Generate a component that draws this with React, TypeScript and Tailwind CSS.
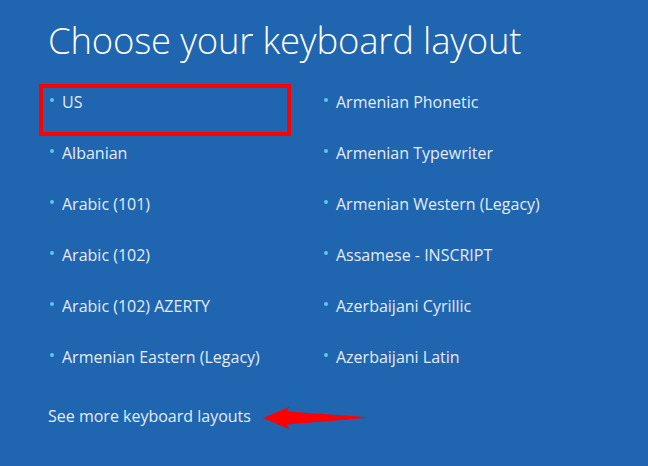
import React from 'react';

const leftCol = ['US', 'Albanian', 'Arabic (101)', 'Arabic (102)', 'Arabic (102) AZERTY', 'Armenian Eastern (Legacy)'];
const rightCol = [
  'Armenian Phonetic',
  'Armenian Typewriter',
  'Armenian Western (Legacy)',
  'Assamese - INSCRIPT',
  'Azerbaijani Cyrillic',
  'Azerbaijani Latin',
];

function Item({ label }: { label: string }) {
  return (
    <div className="flex items-center h-[51px]">
      <span className="w-[4px] h-[4px] rounded-full bg-[#5ec6f0] mr-[8px] -mt-[3px]" />
      <span className="text-[16px] text-[#e4ecf6]">{label}</span>
    </div>
  );
}

export default function App() {
  return (
    <div
      className="relative w-[648px] h-[466px] bg-[#1f65b0] overflow-hidden"
      style={{ fontFamily: '"Open Sans", "Noto Sans", sans-serif' }}
    >
      <div className="pl-[48px] pt-[14px]">
        <h1 className="text-[36.5px] font-light text-white leading-[52px] tracking-[-0.2px]">
          Choose your keyboard layout
        </h1>

        <div className="flex mt-[10px]">
          <div className="w-[274px] pl-[2px]">
            {leftCol.map((l) => (
              <Item key={l} label={l} />
            ))}
          </div>
          <div className="pl-[2px]">
            {rightCol.map((l) => (
              <Item key={l} label={l} />
            ))}
          </div>
        </div>

        <div className="mt-[22px] text-[16px] text-[#e4ecf6]">See more keyboard layouts</div>
      </div>

      {/* red highlight box */}
      <div className="absolute left-[39px] top-[84px] w-[252px] h-[52px] border-[4px] border-[#ff0000]" />

      {/* red arrow */}
      <svg className="absolute left-[260px] top-[404px]" width="110" height="28" viewBox="0 0 110 28">
        <path d="M3 14 L29 3 L27 7.5 L105 13 L105 14 L27 20.5 L29 25 Z" fill="#ff0000" />
      </svg>
    </div>
  );
}
